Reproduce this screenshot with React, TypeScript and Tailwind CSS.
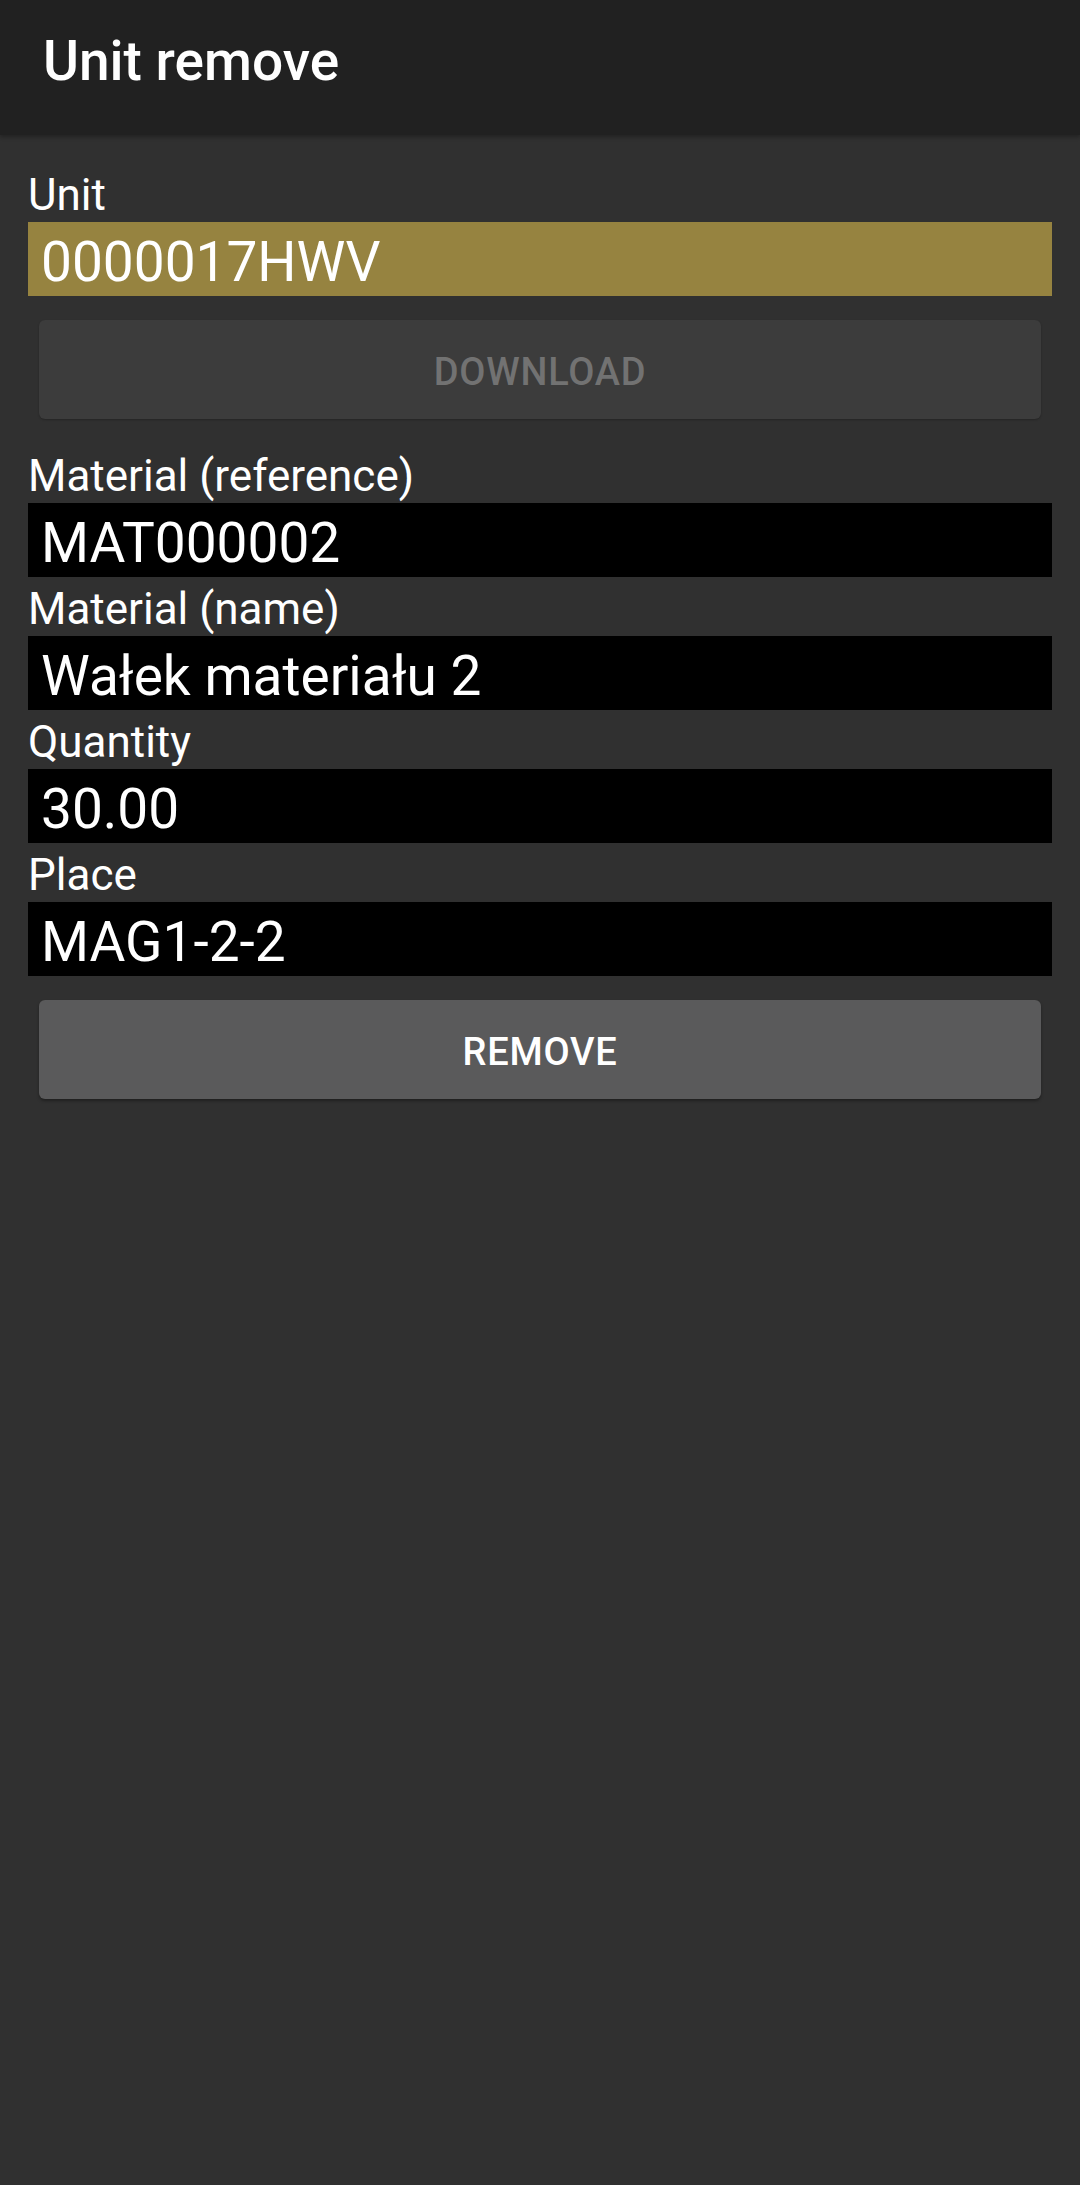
import React from "react";

interface FieldProps {
  label: string;
  value: string;
  highlight?: boolean;
  first?: boolean;
}

function Field({ label, value, highlight, first }: FieldProps) {
  return (
    <div className={first ? "" : "mt-[8px]"}>
      <div className="text-[44px] leading-[49px] text-white">{label}</div>
      <div
        className={`mt-[2px] h-[74px] overflow-hidden pl-[13px] pt-[8px] text-[55px] leading-[64px] text-white ${
          highlight ? "bg-[#968340]" : "bg-black"
        }`}
      >
        {value}
      </div>
    </div>
  );
}

interface ActionButtonProps {
  label: string;
  disabled?: boolean;
}

function ActionButton({ label, disabled }: ActionButtonProps) {
  return (
    <button
      type="button"
      disabled={disabled}
      className={`mx-[11px] flex h-[99px] w-[1002px] items-center justify-center rounded-[6px] pt-[5px] text-[38px] font-medium uppercase tracking-[0.02em] ${
        disabled
          ? "bg-[#3c3c3c] text-[#727272] shadow-[0_1px_2px_rgba(0,0,0,0.25)]"
          : "bg-[#5a5a5b] text-white shadow-[0_2px_3px_rgba(0,0,0,0.35)]"
      }`}
    >
      {label}
    </button>
  );
}

export default function App() {
  return (
    <div className="min-h-[2185px] bg-[#303030] font-['Roboto','Noto_Sans',sans-serif]">
      <header className="h-[135px] bg-[#212121] pl-[43px] pt-[30px] shadow-[0_2px_4px_rgba(0,0,0,0.3)]">
        <h1 className="text-[55px] font-medium leading-[62px] text-white">Unit remove</h1>
      </header>

      <main className="px-[28px] pt-[36px]">
        <Field first label="Unit" value="0000017HWV" highlight />

        <div className="mt-[24px]">
          <ActionButton label="Download" disabled />
        </div>

        <div className="mt-[33px]">
          <Field first label="Material (reference)" value="MAT000002" />
          <Field label="Material (name)" value="Wałek materiału 2" />
          <Field label="Quantity" value="30.00" />
          <Field label="Place" value="MAG1-2-2" />
        </div>

        <div className="mt-[24px]">
          <ActionButton label="Remove" />
        </div>
      </main>
    </div>
  );
}
